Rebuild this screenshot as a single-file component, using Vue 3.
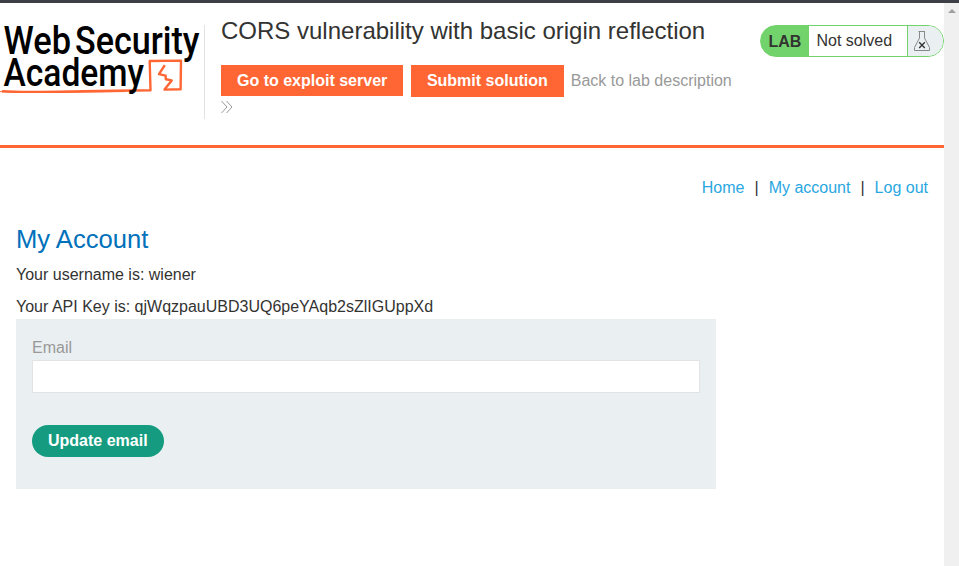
<script setup>
const account = {
  username: 'wiener',
  apiKey: 'qjWqzpauUBD3UQ6peYAqb2sZlIGUppXd'
}
const links = ['Home', 'My account', 'Log out']
</script>

<template>
  <div class="window">
    <div class="page">
      <header class="banner">
        <svg class="logo" width="204" height="94" viewBox="0 25 204 94" role="img">
          <g class="wordmark">
            <text x="3.5" y="53.5" textLength="67.5" lengthAdjust="spacingAndGlyphs">Web</text>
            <text x="75" y="53.5" textLength="124.5" lengthAdjust="spacingAndGlyphs">Security</text>
          </g>
          <g class="sketch">
            <path d="M2 91.2 C22 92.6 50 91.8 83 91.2 L150.5 90.2 L149.7 61 L181 60.6 L180.6 89.3 L164.5 89.6 L171.7 80.4 L165.8 79.2 L165.6 75.6 L159 74.2 L164.8 65.2" />
            <path class="thin" d="M0 91.6 C35 93.4 70 92 125 91.6" />
          </g>
          <text class="wordmark" x="3.5" y="86" textLength="140.5" lengthAdjust="spacingAndGlyphs">Academy</text>
        </svg>
        <div class="title-area">
          <h2>CORS vulnerability with basic origin reflection</h2>
          <div class="actions">
            <a class="action first">Go to exploit server</a>
            <a class="action submit">Submit solution</a>
            <a class="back">Back to lab description</a>
          </div>
          <svg class="chevrons" width="12" height="14" viewBox="0 0 12 14">
            <path d="M0.5 1 L6 7 L0.5 13 M5.5 1 L11 7 L5.5 13" />
          </svg>
        </div>
        <div class="status">
          <span class="lab">LAB</span>
          <span class="state">Not solved</span>
          <span class="flask">
            <svg width="18" height="22" viewBox="0 0 18 22">
              <path class="glass" d="M5.5 1.5 H12 M6.5 1.5 V8 L1.5 17.5 V20.5 H16.5 V17.5 L11.5 8 V1.5" />
              <path class="cross" d="M6.2 12.2 L11.8 18 M11.8 12.2 L6.2 18" />
            </svg>
          </span>
        </div>
      </header>

      <main>
        <nav>
          <template v-for="(link, i) in links" :key="link">
            <span v-if="i" class="bar">|</span>
            <a>{{ link }}</a>
          </template>
        </nav>
        <h1>My Account</h1>
        <p>Your username is: {{ account.username }}</p>
        <p class="key">Your API Key is: {{ account.apiKey }}</p>
        <form @submit.prevent>
          <label for="email">Email</label>
          <input id="email" type="email" />
          <button type="submit">Update email</button>
        </form>
      </main>
    </div>
    <div class="scrollbar"><i></i></div>
  </div>
</template>

<style>
body {
  overflow: hidden;
}
</style>

<style scoped>
* {
  box-sizing: border-box;
}
.window {
  display: flex;
  height: 566px;
  border-top: 3px solid #3e3f46;
  background: #fff;
  color: #333332;
  font: 16px/24px "Liberation Sans", Arial, sans-serif;
}
.page {
  flex: 1;
  min-width: 0;
}
.banner {
  display: flex;
  align-items: flex-start;
  height: 145px;
  border-bottom: 3px solid #ff6633;
}
.logo {
  flex: none;
  margin-top: 22px;
  overflow: visible;
}
.wordmark {
  font-family: Roboto, sans-serif;
  font-size: 38px;
  font-weight: 500;
  fill: #000;
}
.sketch {
  fill: none;
  stroke: #ff6633;
  stroke-width: 2.4;
  stroke-linejoin: round;
}
.thin {
  stroke-width: 1;
}
.title-area {
  flex: 1;
  height: 94px;
  margin-top: 22px;
  padding-left: 16px;
  border-left: 1px solid #e1e1e1;
}
h2 {
  margin: -10px 0 18px;
  font-size: 24px;
  font-weight: 400;
  line-height: 32px;
  white-space: nowrap;
}
.actions {
  display: flex;
  align-items: flex-start;
  white-space: nowrap;
}
.action {
  height: 32px;
  margin-right: 8px;
  padding: 0 16px;
  background: #ff6633;
  color: #fff;
  font-weight: 700;
  line-height: 32px;
}
.first {
  height: 31px;
}
.submit {
  margin-left: -0.4px;
}
.back {
  margin-left: -1px;
  color: #999;
  line-height: 32px;
}
.chevrons {
  display: block;
  margin-top: 3px;
  fill: none;
  stroke: #999;
  stroke-width: 1;
}
.status {
  display: flex;
  flex: none;
  width: 184px;
  height: 32px;
  margin-top: 22px;
  overflow: hidden;
  border: 1px solid #72d36c;
  border-radius: 16px;
  background: linear-gradient(90deg, #72d36c 48px, #fff 48px);
  line-height: 30px;
}
.lab {
  width: 48px;
  padding-left: 7.4px;
  background: #72d36c;
  font-weight: 700;
  line-height: 32px;
}
.state {
  flex: 1;
  padding-left: 7.5px;
}
.flask {
  width: 36px;
  padding: 4px 0 0 5px;
  border-left: 1px solid #72d36c;
  background: #eaeff2;
}
.flask svg {
  display: block;
  fill: none;
}
.glass {
  stroke: #888;
}
.cross {
  stroke: #333;
  stroke-width: 1.3;
}
main {
  padding: 28px 16px 0;
}
nav {
  display: flex;
  justify-content: flex-end;
  gap: 10px;
}
nav a {
  color: #29a7df;
}
h1 {
  margin: 21px 0 6px;
  color: #0071ba;
  font-size: 25.6px;
  font-weight: 400;
  line-height: 36px;
}
p {
  margin: 0 0 8px;
}
.key {
  margin-bottom: 0;
}
form {
  width: 700px;
  height: 170px;
  padding: 17px 16px;
  background: #eaeff2;
}
label {
  display: block;
  color: #999;
}
input {
  display: block;
  width: 100%;
  height: 33px;
  padding: 0 8px;
  border: 1px solid #e1e3e4;
  background: #fff;
}
button {
  display: block;
  height: 32px;
  margin-top: 32px;
  padding: 0 16px;
  border: 0;
  border-radius: 16px;
  background: #159c80;
  color: #fff;
  font: 700 16px/32px "Liberation Sans", Arial, sans-serif;
}
.scrollbar {
  display: flex;
  justify-content: center;
  width: 15px;
  background: #f0f0f0;
}
.scrollbar i {
  width: 0;
  height: 0;
  margin-top: 6px;
  border: 4px solid transparent;
  border-top: 0;
  border-bottom-color: #a0a0a0;
}
</style>
